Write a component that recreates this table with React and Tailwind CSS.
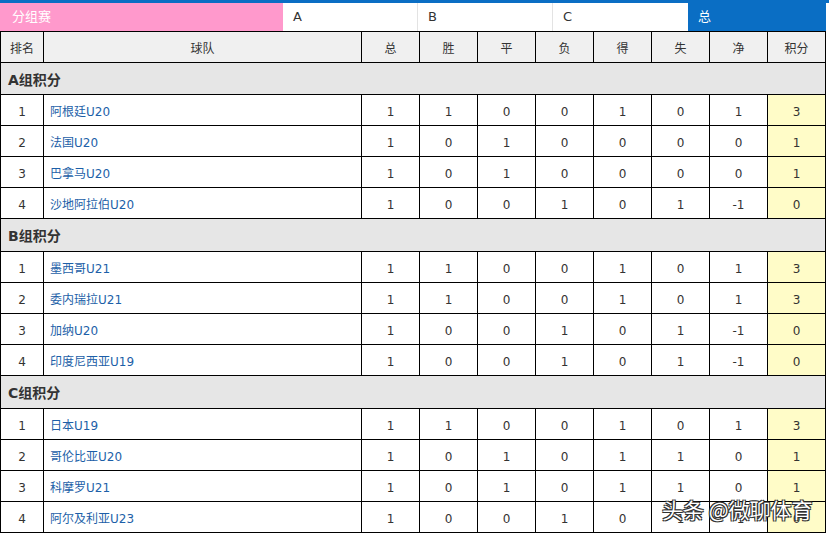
import React from 'react';

const groups = [
  {
    name: 'A组积分',
    h: 'h-[32px]',
    rows: [
      ['阿根廷U20', 1, 1, 0, 0, 1, 0, 1, 3],
      ['法国U20', 1, 0, 1, 0, 0, 0, 0, 1],
      ['巴拿马U20', 1, 0, 1, 0, 0, 0, 0, 1],
      ['沙地阿拉伯U20', 1, 0, 0, 1, 0, 1, -1, 0],
    ],
  },
  {
    name: 'B组积分',
    h: 'h-[33px]',
    rows: [
      ['墨西哥U21', 1, 1, 0, 0, 1, 0, 1, 3],
      ['委内瑞拉U21', 1, 1, 0, 0, 1, 0, 1, 3],
      ['加纳U20', 1, 0, 0, 1, 0, 1, -1, 0],
      ['印度尼西亚U19', 1, 0, 0, 1, 0, 1, -1, 0],
    ],
  },
  {
    name: 'C组积分',
    h: 'h-[33px]',
    rows: [
      ['日本U19', 1, 1, 0, 0, 1, 0, 1, 3],
      ['哥伦比亚U20', 1, 0, 1, 0, 1, 1, 0, 1],
      ['科摩罗U21', 1, 0, 1, 0, 1, 1, 0, 1],
      ['阿尔及利亚U23', 1, 0, 0, 1, 0, 1, -1, 0],
    ],
  },
];

const heads = ['总', '胜', '平', '负', '得', '失', '净', '积分'];
const cols = 'grid grid-cols-[43px_318px_repeat(8,58px)]';
// text in the shot sits a touch below centre
const cell = 'flex items-center justify-center border-r border-b border-black pt-[3px]';

function Tabs() {
  return (
    <div className="flex h-[28px] w-[826px] text-[13px]">
      <div className="flex w-[283px] items-center bg-[#ff99cc] pl-3 text-white">分组赛</div>
      <div className="flex w-[135px] items-center border-r border-[#e3e3e3] pl-[10px] text-[#333]">A</div>
      <div className="flex w-[135px] items-center border-r border-[#e3e3e3] pl-[10px] text-[#333]">B</div>
      <div className="flex w-[135px] items-center pl-[10px] text-[#333]">C</div>
      <div className="flex flex-1 items-center bg-[#0a6ec4] pl-[10px] text-white">总</div>
    </div>
  );
}

export default function App() {
  return (
    <div
      className="relative h-[533px] w-[829px] overflow-hidden bg-white"
      style={{ fontFamily: '"DejaVu Sans", "Noto Sans CJK SC", sans-serif' }}
    >
      <div className="h-[3px] w-full bg-[#0a6ec4]" />
      <Tabs />
      <div className="w-[826px] border-l border-t border-black text-[12px] text-[#333]">
        <div className={`${cols} h-[31px] bg-[#f0f0f0]`}>
          <div className={cell}>排名</div>
          <div className={cell}>球队</div>
          {heads.map((h) => (
            <div key={h} className={cell}>{h}</div>
          ))}
        </div>
        {groups.map((g) => (
          <div key={g.name}>
            <div
              className={`${g.h} flex items-center border-r border-b border-black bg-[#e6e6e6] pl-[7px] pt-[3px] text-[14px] font-bold text-[#333]`}
            >
              {g.name}
            </div>
            {g.rows.map((r, i) => (
              <div key={r[0]} className={`${cols} h-[31px]`}>
                <div className={cell}>{i + 1}</div>
                <div className="flex items-center border-r border-b border-black pl-[6px] pt-[3px] text-[12px] text-[#1d5fa8]">
                  {r[0]}
                </div>
                {r.slice(1).map((v, j) => (
                  <div key={j} className={`${cell} ${j === 7 ? 'bg-[#fffcc8]' : ''}`}>
                    {v}
                  </div>
                ))}
              </div>
            ))}
          </div>
        ))}
      </div>
      <div
        className="absolute left-[662px] top-[494px] text-[21px] text-white"
        style={{
          fontFamily: '"Noto Sans CJK SC", sans-serif',
          textShadow: '0 0 1px #222, 1px 1px 0 #333, -1px -1px 0 #333, 1px -1px 0 #333, -1px 1px 0 #333',
        }}
      >
        头条 @微聊体育
      </div>
    </div>
  );
}
